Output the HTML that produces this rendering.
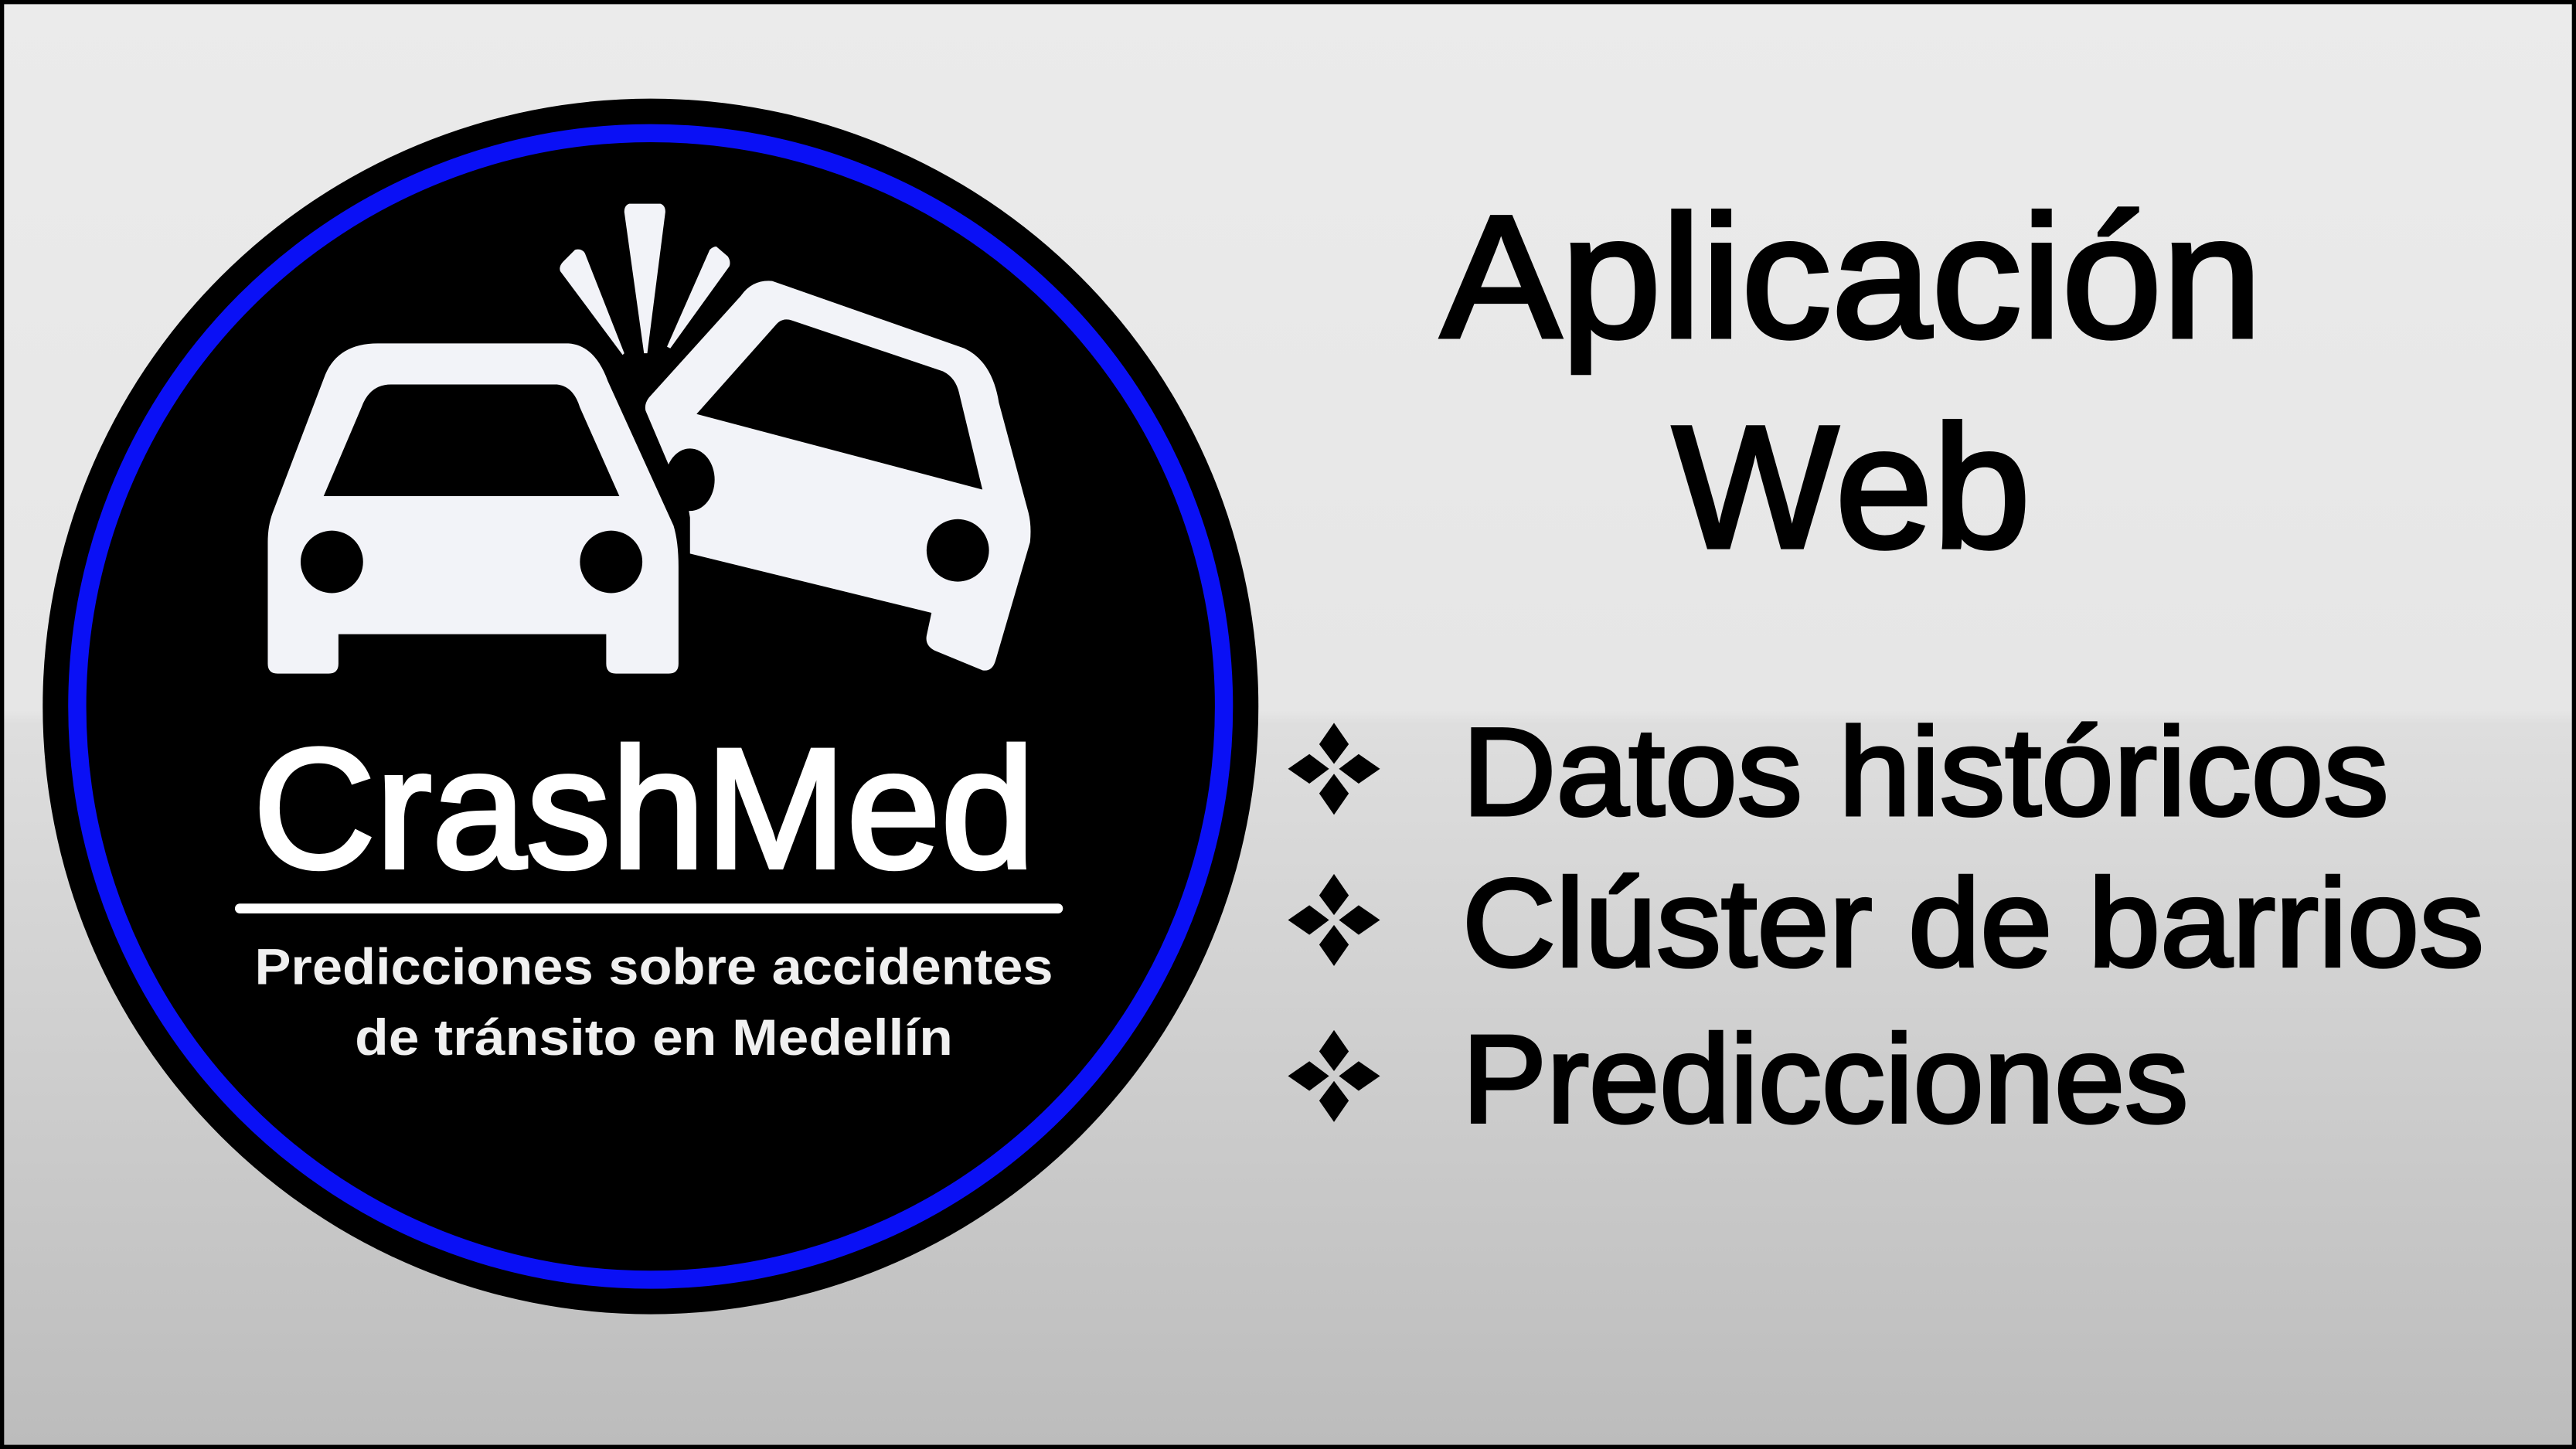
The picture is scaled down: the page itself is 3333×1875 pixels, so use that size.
<!DOCTYPE html>
<html><head><meta charset="utf-8"><style>
html,body{margin:0;padding:0;width:3333px;height:1875px;overflow:hidden}
svg{display:block}
</style></head><body>
<svg width="3333" height="1875" viewBox="0 0 1568 882" xmlns="http://www.w3.org/2000/svg">
<defs>
<linearGradient id="bg" x1="0" y1="0" x2="0" y2="1">
<stop offset="0" stop-color="#ebebeb"/>
<stop offset="0.49" stop-color="#e6e6e6"/>
<stop offset="0.5" stop-color="#dedede"/>
<stop offset="1" stop-color="#bcbcbc"/>
</linearGradient>
</defs>
<rect x="0" y="0" width="1568" height="882" fill="url(#bg)" stroke="#000" stroke-width="5"/>
<circle cx="396" cy="430" r="370" fill="#000"/>
<circle cx="396" cy="430" r="349" fill="none" stroke="#0a10f5" stroke-width="11"/>
<g fill="#f2f3f8">
<path d="M230 209 L346 209 Q362 210 370 232 L410 320 Q413 330 413 345 L413 404 Q413 410 407 410 L375 410 Q369 410 369 404 L369 386 L206 386 L206 404 Q206 410 200 410 L169 410 Q163 410 163 404 L163 330 Q163 320 166 312 L198 228 Q206 209 230 209 Z"/>
<path d="M470 171 L587 212 Q604 220 608 245 L626 312 Q628 320 627 330 L606 402 Q604 409 598 408 L569 396 Q563 393 564 387 L567 373 L420 337 L420 315 Q418 300 410 290 L393 250 Q392 246 395 242 L451 180 Q458 170 470 171 Z"/>
<path d="M383 124 L402 124 Q405 125 405 129 L394 215 L392 215 L380 129 Q380 125 383 124 Z"/>
<path d="M343 159 L350 152 Q354 151 356 154 L380 215 L379 216 L341 165 Q340 162 343 159 Z"/>
<path d="M436 150 L443 156 Q445 159 444 162 L408 212 L406 211 L432 152 Q434 150 436 150 Z"/>
</g>
<g fill="#000">
<path d="M238 234 L339 234 Q349 235 353 248 L377 302 L197 302 L220 248 Q225 234 238 234 Z"/>
<circle cx="202" cy="342" r="19"/>
<circle cx="372" cy="342" r="19"/>
<path d="M472 198 Q476 193 482 195 L574 226 Q582 230 584 240 L598 298 L424 252 Z"/>
<circle cx="583" cy="335" r="19"/>
<ellipse cx="420" cy="292" rx="15" ry="19"/>
</g>
<text x="392" y="528" font-family="Liberation Sans, sans-serif" font-size="104" fill="#fff" stroke="#fff" stroke-width="2.5" text-anchor="middle" textLength="476" lengthAdjust="spacingAndGlyphs">CrashMed</text>
<line x1="146" y1="553" x2="644" y2="553" stroke="#fff" stroke-width="6" stroke-linecap="round"/>
<g font-family="Liberation Sans, sans-serif" font-weight="bold" font-size="31" fill="#f0f0f0" text-anchor="middle">
<text x="398" y="599" textLength="486" lengthAdjust="spacingAndGlyphs">Predicciones sobre accidentes</text>
<text x="398" y="642" textLength="364" lengthAdjust="spacingAndGlyphs">de tránsito en Medellín</text>
</g>
<g font-family="Liberation Sans, sans-serif" fill="#000" stroke="#000">
<text x="1127" y="205" font-size="106" stroke-width="2.5" text-anchor="middle" textLength="500" lengthAdjust="spacingAndGlyphs">Aplicación</text>
<text x="1127" y="333" font-size="106" stroke-width="2.5" text-anchor="middle" textLength="218" lengthAdjust="spacingAndGlyphs">Web</text>
<text x="890" y="496" font-size="76" stroke-width="2" textLength="564" lengthAdjust="spacingAndGlyphs">Datos históricos</text>
<text x="890" y="588" font-size="76" stroke-width="2" textLength="622" lengthAdjust="spacingAndGlyphs">Clúster de barrios</text>
<text x="890" y="683" font-size="76" stroke-width="2" textLength="442" lengthAdjust="spacingAndGlyphs">Predicciones</text>
</g>
<g fill="#000">
<g transform="translate(812,468)"><path id="d" d="M0 -28 L9 -15 L0 -3 L-9 -15 Z M0 3 L9 15 L0 28 L-9 15 Z M-28 0 L-15 -9 L-3 0 L-15 9 Z M3 0 L15 -9 L28 0 L15 9 Z"/></g>
<g transform="translate(812,560)"><use href="#d"/></g>
<g transform="translate(812,655)"><use href="#d"/></g>
</g>
</svg>
</body></html>
